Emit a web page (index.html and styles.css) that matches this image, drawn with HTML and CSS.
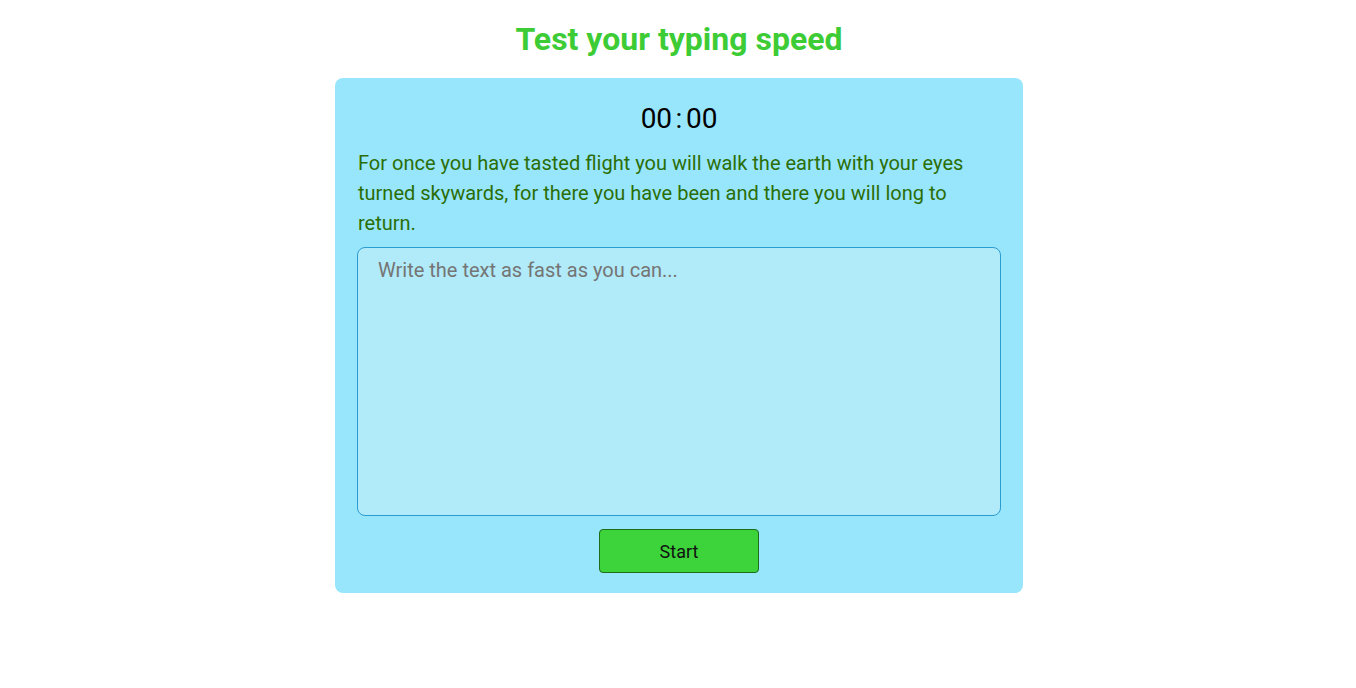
FILE: index.html
```html
<!DOCTYPE html>
<html lang="en">
<head>
<meta charset="utf-8">
<title>Typing speed</title>
<link rel="stylesheet" href="styles.css">
</head>
<body>
<h1 class="title">Test your typing speed</h1>
<main class="card">
  <div class="timer"><span>00</span><span class="colon">:</span><span>00</span></div>
  <p class="quote">For once you have tasted flight you will walk the earth with your eyes turned skywards, for there you have been and there you will long to return.</p>
  <textarea class="input" placeholder="Write the text as fast as you can..."></textarea>
  <div class="actions"><button class="start" type="button">Start</button></div>
</main>
</body>
</html>
```
FILE: styles.css
```css
html, body { margin: 0; padding: 0; background: #fff; }
body { font-family: Roboto, "Liberation Sans", sans-serif; padding-left: 2px; }
.title {
  margin: 0;
  padding-top: 20px;
  height: 78px;
  box-sizing: border-box;
  text-align: center;
  font-size: 32px;
  line-height: 38px;
  font-weight: 700;
  color: #3dcc35;
}
.card {
  width: 688px;
  margin: 0 auto;
  box-sizing: border-box;
  background: #98e6fc;
  border-radius: 8px;
  padding: 21px 22px 20px 22px;
  display: flex;
  flex-direction: column;
}
.timer {
  text-align: center;
  font-size: 28px;
  line-height: 40px;
  color: #000;
}
.colon { padding: 0 3.5px; }
.quote {
  margin: 9px 0 9px 1px;
  font-size: 20px;
  line-height: 30px;
  color: #2b6e07;
}
.input {
  display: block;
  width: 100%;
  height: 269px;
  box-sizing: border-box;
  margin: 0;
  resize: none;
  background: #b1eaf8;
  border: 1px solid #2b9cd1;
  border-radius: 8px;
  padding: 9px 20px;
  font-family: Roboto, "Liberation Sans", sans-serif;
  font-size: 20px;
  line-height: 26px;
  color: #333;
  outline: none;
}
.input::placeholder { color: #757575; }
.actions {
  display: flex;
  justify-content: center;
  padding-top: 13px;
}
.start {
  width: 160px;
  height: 44px;
  background: #3dd33a;
  border: 1px solid #1f6b1c;
  border-radius: 4px;
  font-family: Roboto, "Liberation Sans", sans-serif;
  font-size: 18px;
  color: #111;
  cursor: pointer;
}
```
